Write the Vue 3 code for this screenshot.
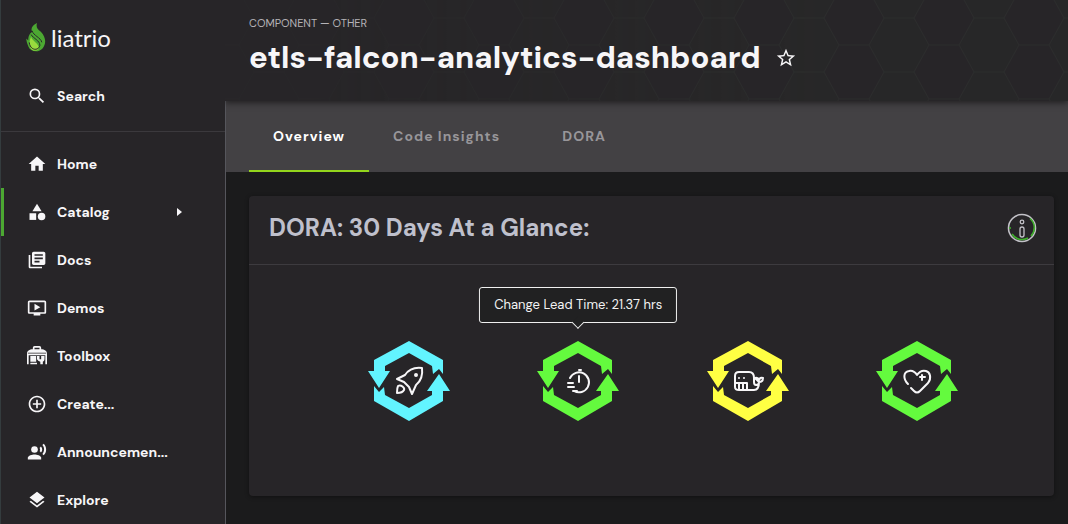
<script setup>
const nav = [
  { label: 'Home', paths: ['M10 20v-6h4v6h5v-8h3L12 3 2 12h3v8z'] },
  { label: 'Catalog', active: true, paths: ['M12 2l-5.5 9h11z', 'M17.5 13a4.5 4.5 0 1 0 0 9 4.5 4.5 0 0 0 0-9z', 'M3 13.5h8v8H3z'] },
  { label: 'Docs', paths: ['M4 6H2v14c0 1.1.9 2 2 2h14v-2H4V6z', 'M20 2H8c-1.100 0-2 .9-2 2v12c0 1.100.9 2 2 2h12c1.100 0 2-.9 2-2V4c0-1.100-.9-2-2-2zm-1 9H9V9h10v2zm-4 4H9v-2h6v2zm4-8H9V5h10v2z'] },
  { label: 'Demos', paths: ['M21 3H3c-1.110 0-2 .89-2 2v12c0 1.100.89 2 2 2h5v2h8v-2h5c1.100 0 2-.9 2-2V5c0-1.110-.9-2-2-2zm0 14H3V5h18v12zm-5-6l-7 4V7z'] },
  { label: 'Toolbox', paths: ['M7 4V2q0-2 2-2h6q2 0 2 2v2c4 0 7 2 7 5v13h-2V11H2v11H0V9c0-3 3-5 7-5zm2 0h6V2H9zM1 8v1h22V8z', 'M4 12h7v7H4zM4 20h8v2H4z', 'M12 12h3v4h2v-4h4v4q0 2-2 3v3h-3v-3q-3-1-4-3z'] },
  { label: 'Create...', paths: ['M13 7h-2v4H7v2h4v4h2v-4h4v-2h-4V7zm-1-5C6.480 2 2 6.480 2 12s4.480 10 10 10 10-4.480 10-10S17.520 2 12 2zm0 18c-4.410 0-8-3.590-8-8s3.590-8 8-8 8 3.590 8 8-3.590 8-8 8z'] },
  { label: 'Announcemen...', paths: ['M9 5a4 4 0 1 0 0 8 4 4 0 0 0 0-8z', 'M9 15c-2.670 0-8 1.340-8 4v2h16v-2c0-2.660-5.330-4-8-4z', 'M16.760 5.360l-1.680 1.690c.84 1.180.84 2.710 0 3.890l1.680 1.690c2.020-2.020 2.020-5.070 0-7.270z', 'M20.070 2l-1.630 1.630c2.770 3.020 2.770 7.560 0 10.740L20.070 16c3.900-3.890 3.910-9.950 0-14z'] },
  { label: 'Explore', paths: ['M11.990 18.540l-7.370-5.730L3 14.070l9 7 9-7-1.630-1.270-7.380 5.740z', 'M12 16l7.360-5.730L21 9l-9-7-9 7 1.630 1.270L12 16z'] },
]
const tabs = ['Overview', 'Code Insights', 'DORA']
const metrics = [
  { name: 'Deployment Frequency', tone: 'cyan', icon: 'rocket' },
  { name: 'Change Lead Time', tone: 'green', icon: 'timer', tip: 'Change Lead Time: 21.37 hrs' },
  { name: 'Change Failure Rate', tone: 'yellow', icon: 'whale' },
  { name: 'Recovery Time', tone: 'green', icon: 'heart' },
]
</script>

<template>
  <div class="app">
    <aside class="sidebar">
      <a class="brand" href="#" aria-label="liatrio">
        <svg class="flame" viewBox="0 0 20 32" aria-hidden="true">
          <path fill="#4ca832" d="M11 1c-1 4 0 6 4 9 5 5 6 12 2 17-4 5-13 4-15-2-1-3-2-5-2-8l2 2c0-6 2-7 4-9C4 6 7 3 11 1z" />
          <path fill="#9adb3e" d="M5 15c0 4 8 7 8 12 0 3-8 4-9-1-1-3-1-7 1-11z" />
          <path fill="none" stroke="#272528" stroke-width="1" d="M3 21c1 9 10 9 11 3 0-5-7-7-9-11M6 9c1 5 9 7 10 12" />
        </svg>
        <span>liatrio</span>
      </a>
      <button class="item search" type="button">
        <svg viewBox="0 0 24 24" aria-hidden="true"><path d="M15.500 14h-.79l-.28-.27A6.470 6.470 0 0 0 16 9.500 6.500 6.500 0 1 0 9.500 16c1.610 0 3.090-.59 4.230-1.570l.27.28v.79l5 4.990L20.490 19l-4.990-5zm-6 0a4.500 4.500 0 1 1 0-9 4.500 4.500 0 0 1 0 9z" /></svg>
        <span>Search</span>
      </button>
      <nav>
        <a v-for="n in nav" :key="n.label" href="#" class="item" :class="{ active: n.active }">
          <svg viewBox="0 0 24 24" aria-hidden="true"><path v-for="p in n.paths" :key="p" fill-rule="evenodd" :d="p" /></svg>
          <span>{{ n.label }}</span>
          <svg v-if="n.active" class="caret" viewBox="0 0 5 8" aria-hidden="true"><path d="M0 0l5 4-5 4z" /></svg>
        </a>
      </nav>
    </aside>

    <main>
      <header>
        <svg class="pattern" aria-hidden="true">
          <defs>
            <pattern id="hexes" width="90" height="54" patternUnits="userSpaceOnUse" patternTransform="translate(-1 18)">
              <path d="M15 27l15-27h30l15 27-15 27H30z" fill="#282828" />
              <path d="M0 27h15l15-27h30l15 27h15M15 27l15 27h30l15-27" fill="none" stroke="#2d2f2e" />
            </pattern>
            <linearGradient id="fade"><stop offset=".1" stop-color="#fff" stop-opacity=".2" /><stop offset=".7" stop-color="#fff" stop-opacity=".8" /></linearGradient>
            <mask id="fademask"><rect width="100%" height="100%" fill="url(#fade)" /></mask>
          </defs>
          <rect width="100%" height="100%" fill="url(#hexes)" mask="url(#fademask)" />
        </svg>
        <p class="kind">COMPONENT — OTHER</p>
        <div class="title">
          <h1>etls-falcon-analytics-dashboard</h1>
          <button type="button" aria-label="Add to favorites">
            <svg viewBox="0 0 24 24" aria-hidden="true"><path d="M22 9.240l-7.190-.62L12 2 9.190 8.630 2 9.240l5.460 4.730L5.820 21 12 17.270 18.180 21l-1.630-7.030L22 9.240zM12 15.400l-3.760 2.270 1-4.280-3.320-2.880 4.380-.38L12 6.100l1.710 4.040 4.380.38-3.320 2.880 1 4.280L12 15.400z" /></svg>
          </button>
        </div>
      </header>
      <div class="tabs" role="tablist">
        <button v-for="(t, i) in tabs" :key="t" type="button" role="tab" :aria-selected="i === 0" :class="{ on: i === 0 }">{{ t }}</button>
      </div>
      <section class="card">
        <div class="cardhead">
          <h2>DORA: 30 Days At a Glance:</h2>
          <button type="button" aria-label="Information">
            <svg class="info" viewBox="0 0 30 30" aria-hidden="true">
              <circle cx="15" cy="15" r="13.500" stroke="#c2c1c7" stroke-width="1.600" />
              <path d="M23 5.500a12 12 0 0 1 1 17.500M21 25a12 12 0 0 1-16-4M3 14v2" stroke="#3fae2b" stroke-width="1.600" />
              <circle cx="15" cy="9" r="1.800" stroke="#c2c1c7" stroke-width="1.300" />
              <rect x="13" y="14" width="4" height="10" rx="2" stroke="#c2c1c7" stroke-width="1.300" />
            </svg>
          </button>
        </div>
        <div class="metrics">
          <div v-for="m in metrics" :key="m.name" class="metric" :class="m.tone">
            <div v-if="m.tip" class="tip" role="tooltip">{{ m.tip }}</div>
            <svg viewBox="0 0 84 80" role="img" :aria-label="m.name">
              <g fill="currentColor">
                <path d="M7 30V19L42 0l34 19v14l-4-5-6 5-1-8L42 12 18 25v5h5L12 47 1 30z" />
                <path d="M7 45l5 6 5-5 1 8 24 13 23-13v-4h-5l12-17 11 17h-7v10L42 80 7 60z" />
              </g>
              <g class="glyph">
                <template v-if="m.icon === 'rocket'">
                  <path d="M55 27c-8-1-13 1-17 7l-8 4 7 3 5 5 3 7 4-9c5-4 7-9 6-17zM31 45c-1 2-1 4-1 7 4 0 6-1 7-3s-3-6-6-4z" />
                  <circle cx="49" cy="34" r="1" />
                </template>
                <template v-else-if="m.icon === 'timer'">
                  <path d="M34 37a10 10 0 1 1 4 13M43 29h2M43 35v6M32 42h5M32 46h6M37 50h4" />
                </template>
                <template v-else-if="m.icon === 'whale'">
                  <path d="M29 35q0-4 4-4h10q5 0 5 6v4q0 3 2 3 3 0 3-3l-4-4q3-1 4 2 1-3 4-2 0 4-4 4 0 8-5 8H33q-4 0-4-3zM29 42h12v6M33 42v6M37 42v6M33 37h0M38 37h0" />
                </template>
                <template v-else>
                  <path d="M33 43c-5-5-5-12 1-13 4-1 6 1 8 4 2-3 5-5 9-4 4 1 6 7 2 12l-8 8q-3 3-6 0l-3-3M47 34v5M45 36h5" />
                </template>
              </g>
            </svg>
          </div>
        </div>
      </section>
    </main>
  </div>
</template>

<style>
body { background: #1b1b1c; }
</style>

<style scoped>
* { box-sizing: border-box; }
.app { display: flex; min-height: 100vh; font-family: "DM Sans", Inter, sans-serif; color: #f7f6f8; background: #1b1b1c; }
button { border: 0; padding: 0; background: none; font: inherit; color: inherit; }
a { color: inherit; text-decoration: none; }
svg { display: block; fill: currentColor; }
.sidebar { position: relative; z-index: 2; width: 225px; flex: none; background: #272528; border-left: 1px solid #343c3e; }
.brand { display: flex; align-items: center; gap: 5px; height: 74px; padding-left: 25px; font: 24px Lato, sans-serif; }
.flame { width: 20px; height: 31px; }
.item { display: flex; align-items: center; width: 100%; height: 48px; padding-left: 23px; border-left: 3px solid transparent; font-size: 14px; font-weight: 700; text-align: left; }
.item svg { width: 20px; height: 20px; margin-right: 10px; }
.item .caret { width: 5px; height: 8px; margin: 0 43px 0 auto; }
.item.active { border-color: #4ca832; }
.search { margin: -2px 0 11px; }
nav { border-top: 1px solid #3b393d; padding-top: 8px; }
main { flex: 1; min-width: 0; border-left: 1px solid #56565c; }
header { position: relative; z-index: 1; height: 101px; margin-left: -1px; padding: 16px 24px; background: #272528; box-shadow: 0 2px 6px rgba(0, 0, 0, .5); }
.pattern { position: absolute; inset: 0; width: 100%; height: 100%; }
.kind { position: relative; margin: 0; font-size: 11px; line-height: 14px; color: #b5b3b7; }
.title { position: relative; display: flex; align-items: center; gap: 14px; margin-top: 8px; }
h1 { margin: 0; font-size: 31px; line-height: 40px; font-weight: 800; }
.title svg { width: 22px; height: 22px; }
.tabs { display: flex; height: 71px; padding-left: 23px; background: #434144; }
.tabs button { padding: 0 24px; font-size: 14px; font-weight: 700; letter-spacing: 1px; color: #98969a; border-bottom: 2px solid transparent; min-width: 120px; }
.tabs .on { color: #fff; border-color: #93d51c; }
.card { margin: 24px 14px 28px 23px; min-height: 300px; border-radius: 4px; background: #272528; box-shadow: 0 1px 4px rgba(0, 0, 0, .4); }
.cardhead { display: flex; align-items: center; justify-content: space-between; height: 69px; padding: 0 17px 4px 20px; border-bottom: 1px solid #3d3b3f; }
h2 { margin: 0; font-size: 24px; line-height: 32px; font-weight: 700; color: #bfc0cc; }
.cardhead svg { width: 30px; height: 30px; }
.info { fill: none; }
.metrics { display: grid; grid-template-columns: repeat(4, 1fr); padding: 76px 52px 0 75px; }
.metric { position: relative; display: flex; justify-content: center; }
.metric > svg { width: 84px; height: 80px; }
.cyan { color: #62f4ff; }
.green { color: #64fa3e; }
.yellow { color: #ffff43; }
.glyph { fill: none; stroke: #f7f6f8; stroke-width: 2; stroke-linecap: round; stroke-linejoin: round; }
.tip { position: absolute; bottom: calc(100% + 18px); left: 50%; transform: translateX(-50%); padding: 0 14px; border: 1px solid #f0f0f0; border-radius: 3px; background: #212122; color: #f3f3f3; font-size: 13px; line-height: 34px; white-space: nowrap; }
.tip::after { content: ""; position: absolute; left: 50%; bottom: -5px; width: 8px; height: 8px; border: solid #f0f0f0; border-width: 0 1px 1px 0; background: #212122; transform: translateX(-50%) rotate(45deg); }
</style>
